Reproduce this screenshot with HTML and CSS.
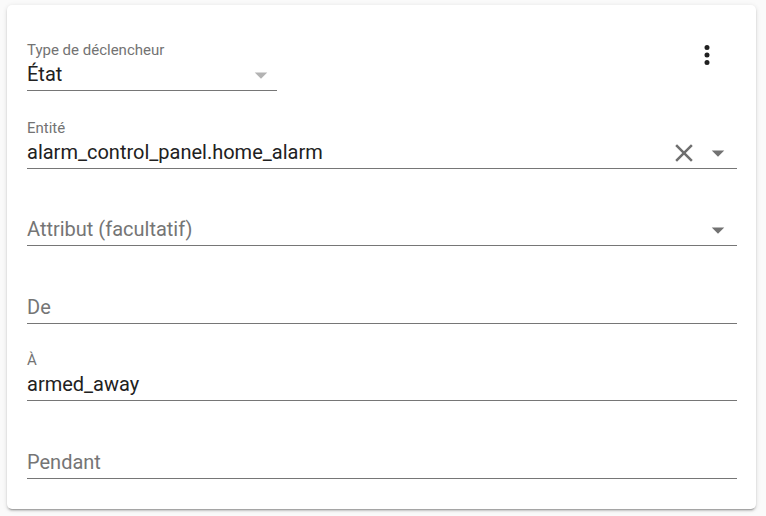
FILE: index.html
```html
<!DOCTYPE html>
<html lang="fr">
<head>
<meta charset="utf-8">
<title>Déclencheur</title>
<link rel="stylesheet" href="styles.css">
</head>
<body>
<div class="card">
  <div class="row-top">
    <div class="field field-short">
      <div class="label">Type de déclencheur</div>
      <div class="input">
        <span class="value">État</span>
        <svg class="arrow arrow-light" viewBox="0 0 24 24"><path d="M7 10l5 5 5-5z"/></svg>
      </div>
    </div>
    <button class="menu-btn" aria-label="menu">
      <svg viewBox="0 0 24 24"><path d="M12,16A2,2 0 0,1 14,18A2,2 0 0,1 12,20A2,2 0 0,1 10,18A2,2 0 0,1 12,16M12,10A2,2 0 0,1 14,12A2,2 0 0,1 12,14A2,2 0 0,1 10,12A2,2 0 0,1 12,10M12,4A2,2 0 0,1 14,6A2,2 0 0,1 12,8A2,2 0 0,1 10,6A2,2 0 0,1 12,4Z"/></svg>
    </button>
  </div>
  <div class="field">
    <div class="label">Entité</div>
    <div class="input">
      <span class="value">alarm_control_panel.home_alarm</span>
      <svg class="clear" viewBox="0 0 24 24"><path d="M19,6.41L17.59,5L12,10.59L6.41,5L5,6.41L10.59,12L5,17.59L6.41,19L12,13.41L17.59,19L19,17.59L13.41,12L19,6.41Z"/></svg>
      <svg class="arrow" viewBox="0 0 24 24"><path d="M7 10l5 5 5-5z"/></svg>
    </div>
  </div>
  <div class="field">
    <div class="label"></div>
    <div class="input">
      <span class="value placeholder">Attribut (facultatif)</span>
      <svg class="arrow" viewBox="0 0 24 24"><path d="M7 10l5 5 5-5z"/></svg>
    </div>
  </div>
  <div class="field">
    <div class="label"></div>
    <div class="input">
      <span class="value placeholder">De</span>
    </div>
  </div>
  <div class="field">
    <div class="label">À</div>
    <div class="input">
      <span class="value">armed_away</span>
    </div>
  </div>
  <div class="field">
    <div class="label"></div>
    <div class="input">
      <span class="value placeholder">Pendant</span>
    </div>
  </div>
</div>
</body>
</html>
```
FILE: styles.css
```css
html, body {
  margin: 0;
  background: #fafafa;
}
body {
  padding: 5px 10px 7px 7px;
  font-family: Roboto, "Liberation Sans", sans-serif;
  color: #212121;
}
.card {
  background: #fff;
  border-radius: 5px;
  box-shadow: 0 2px 2px 0 rgba(0,0,0,.14), 0 1px 5px 0 rgba(0,0,0,.12), 0 3px 1px -2px rgba(0,0,0,.2);
  height: 504px;
  box-sizing: border-box;
  padding: 19px 19px 0 20px;
}
.row-top {
  display: flex;
  justify-content: space-between;
  align-items: flex-start;
}
.field {
  padding: 17px 0 10.5px;
}
.field-short {
  width: 250px;
}
.label {
  height: 19px;
  font-size: 15px;
  line-height: 18px;
  color: #737373;
}
.input {
  display: flex;
  align-items: center;
  height: 30px;
  border-bottom: 1px solid #767676;
}
.value {
  flex: 1;
  font-size: 20px;
  line-height: 28px;
  margin-bottom: 2px;
  white-space: nowrap;
}
.placeholder {
  color: #757575;
}
.arrow {
  width: 30px;
  height: 30px;
  fill: #727272;
  margin-right: 4px;
}
.arrow-light {
  fill: #b3b3b3;
  margin-right: 1px;
}
.clear {
  width: 30px;
  height: 30px;
  fill: #6f6f6f;
  margin-right: 4px;
}
.menu-btn {
  border: 0;
  background: none;
  padding: 0;
  margin: 15.5px 15.5px 0 0;
  width: 30px;
  height: 30px;
}
.menu-btn svg {
  width: 30px;
  height: 30px;
  fill: #202020;
  display: block;
}
```
